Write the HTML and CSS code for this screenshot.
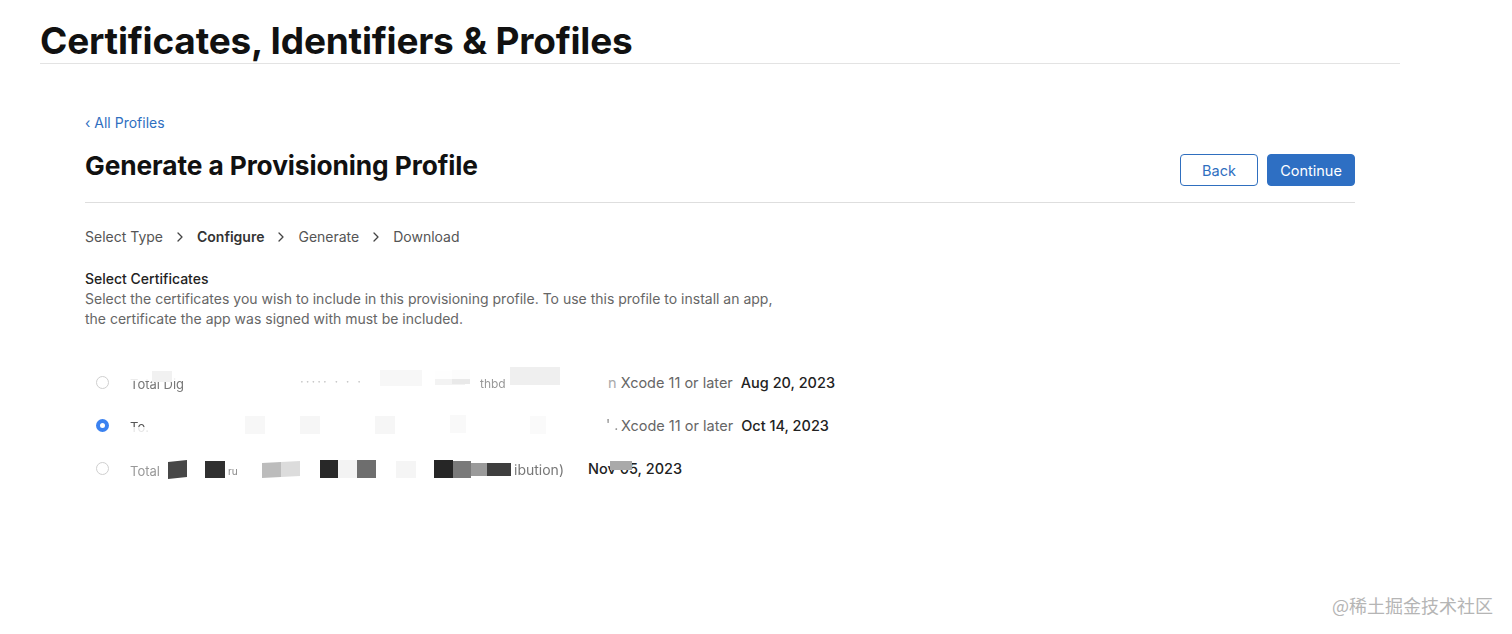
FILE: index.html
```html
<!DOCTYPE html>
<html lang="en">
<head>
<meta charset="utf-8">
<title>Certificates, Identifiers &amp; Profiles</title>
<link rel="stylesheet" href="styles.css">
</head>
<body>
<header class="page-head">
  <h1 class="page-title">Certificates, Identifiers &amp; Profiles</h1>
</header>
<main class="content">
  <a class="back-link" href="#">&lsaquo; All Profiles</a>
  <div class="title-row">
    <h2 class="section-title">Generate a Provisioning Profile</h2>
    <div class="actions">
      <button class="btn btn-outline">Back</button>
      <button class="btn btn-primary">Continue</button>
    </div>
  </div>
  <nav class="steps">
    <span class="step">Select Type</span>
    <svg class="sep" width="6" height="10" viewBox="0 0 6 10"><polyline points="1,1 5,5 1,9" fill="none" stroke="#444" stroke-width="1.3" stroke-linecap="round" stroke-linejoin="round"/></svg>
    <span class="step current">Configure</span>
    <svg class="sep" width="6" height="10" viewBox="0 0 6 10"><polyline points="1,1 5,5 1,9" fill="none" stroke="#444" stroke-width="1.3" stroke-linecap="round" stroke-linejoin="round"/></svg>
    <span class="step">Generate</span>
    <svg class="sep" width="6" height="10" viewBox="0 0 6 10"><polyline points="1,1 5,5 1,9" fill="none" stroke="#444" stroke-width="1.3" stroke-linecap="round" stroke-linejoin="round"/></svg>
    <span class="step">Download</span>
  </nav>
  <section class="certs">
    <h3 class="certs-title">Select Certificates</h3>
    <p class="certs-desc">Select the certificates you wish to include in this provisioning profile. To use this profile to install an app,<br>the certificate the app was signed with must be included.</p>
    <ul class="cert-list">
      <li class="cert">
        <span class="radio"></span>
        <span class="obf obf-1">
          <span class="ft t1">Total Dig</span>
          <span class="cover c-top1"></span>
          <span class="px r1a"></span>
          <span class="ft t2">····· ·  ·  ·</span>
          <span class="px r1b"></span>
          <span class="px r1c"></span>
          <span class="px r1d"></span>
          <span class="ft t3">thbd</span>
          <span class="px r1e"></span>
          <span class="cover c-top2"></span>
        </span>
        <span class="muted"><span class="faint">n</span> Xcode 11 or later</span>
        <span class="date">Aug 20, 2023</span>
      </li>
      <li class="cert">
        <span class="radio checked"></span>
        <span class="obf obf-2">
          <span class="ft t4">To.</span>
          <span class="cover c-top3"></span>
          <span class="px r2a"></span>
          <span class="px r2b"></span>
          <span class="px r2c"></span>
          <span class="px r2d"></span>
          <span class="px r2e"></span>
          <span class="ft t5">' .</span>
        </span>
        <span class="muted">Xcode 11 or later</span>
        <span class="date">Oct 14, 2023</span>
      </li>
      <li class="cert">
        <span class="radio"></span>
        <span class="obf obf-3">
          <span class="ft t6">Total</span>
          <span class="px r3a"></span>
          <span class="px r3b"></span>
          <span class="ft t7">ru</span>
          <span class="px r3c"></span>
          <span class="px r3d"></span>
          <span class="px r3e"></span>
          <span class="px r3f"></span>
          <span class="px r3g"></span>
          <span class="px r3h"></span>
          <span class="px r3i"></span>
          <span class="px r3j"></span>
          <span class="ft t8">ibution)</span>
        </span>
        <span class="date date-3">Nov 05, 2023</span>
        <span class="px r3k"></span>
      </li>
    </ul>
  </section>
</main>
<div class="watermark">@稀土掘金技术社区</div>
</body>
</html>
```

FILE: styles.css
```css
* { box-sizing: border-box; }
html, body { margin: 0; padding: 0; background: #fff; }
body {
  font-family: Inter, "Noto Sans", "Liberation Sans", sans-serif;
  color: #1d1d1f;
  width: 1512px;
  height: 634px;
  overflow: hidden;
  position: relative;
}
.page-head {
  margin: 0 112px 0 40px;
  border-bottom: 1px solid #e3e3e3;
  padding-top: 19px;
}
.page-title {
  margin: 0;
  font-size: 37px;
  font-weight: 700;
  letter-spacing: -0.2px;
  line-height: 44px;
  color: #111;
}
.content {
  margin: 0 157px 0 85px;
  padding-top: 50px;
}
.back-link {
  display: block;
  font-size: 14px;
  color: #2f6fbf;
  text-decoration: none;
  line-height: 18px;
}
.title-row {
  display: flex;
  align-items: flex-start;
  justify-content: space-between;
  margin-top: 18px;
  padding-bottom: 16px;
  border-bottom: 1px solid #dedede;
}
.section-title {
  margin: 0;
  font-size: 26.3px;
  font-weight: 700;
  color: #111;
  letter-spacing: -0.1px;
  line-height: 32px;
}
.actions { display: flex; gap: 9px; margin-top: 4px; }
.btn {
  height: 32px;
  font-family: inherit;
  font-size: 14.5px;
  border-radius: 4px;
  padding: 0;
  cursor: pointer;
}
.btn-outline {
  width: 78px;
  background: #fff;
  color: #2f6fbf;
  border: 1px solid #2f6fbf;
}
.btn-primary {
  width: 88px;
  background: #2e6fc3;
  color: #fff;
  border: 1px solid #2e6fc3;
}
.steps {
  display: flex;
  align-items: center;
  gap: 14px;
  margin-top: 25px;
  font-size: 14px;
  color: #555;
  line-height: 18px;
}
.steps .current { font-weight: 600; color: #333; }
.steps .sep { flex: none; }
.certs { margin-top: 23px; }
.certs-title {
  margin: 0;
  font-size: 14px;
  font-weight: 500;
  color: #222;
  line-height: 20px;
}
.certs-desc {
  margin: 0;
  font-size: 14px;
  color: #666;
  line-height: 20px;
}
.cert-list {
  list-style: none;
  margin: 31px 0 0;
  padding: 0 0 0 11px;
}
.cert {
  display: flex;
  align-items: center;
  height: 44px;
  font-size: 14.5px;
  position: relative;
}
.cert + .cert { height: 43px; }
.radio {
  width: 13px;
  height: 13px;
  border-radius: 50%;
  border: 1px solid #cfcfcf;
  background: #fff;
  margin-right: 21px;
  flex: none;
}
.radio.checked {
  border: 4px solid #3b82f0;
}
.obf {
  position: relative;
  flex: none;
  height: 24px;
}
.obf-1 { width: 478px; }
.obf-2 { width: 491px; }
.obf-3 { width: 458px; }
.ft {
  position: absolute;
  top: 4px;
  white-space: nowrap;
  font-size: 13px;
  line-height: 16px;
  color: #8a8a8a;
  filter: blur(0.5px);
}
.cover { position: absolute; background: #fff; opacity: 0.85; }
.px { position: absolute; display: block; }
.t1 { left: 0; top: 6px; color: #777; }
.c-top1 { left: 0; top: 0; width: 70px; height: 11px; }
.r1a { left: 22px; top: 1px; width: 20px; height: 11px; background: #f1f1f1; }
.t2 { left: 170px; top: 3px; color: #c4c4c4; letter-spacing: 2px; }
.r1b { left: 250px; top: 0; width: 42px; height: 16px; background: #f7f7f7; }
.r1c { left: 305px; top: 1px; width: 30px; height: 14px; background: #f3f3f3; }
.r1d { left: 322px; top: 0; width: 18px; height: 14px; background: #e9e9e9; }
.t3 { left: 350px; top: 6px; color: #999; font-size: 12px; }
.c-top2 { left: 300px; top: 0; width: 80px; height: 9px; }
.r1e { left: 380px; top: -3px; width: 50px; height: 18px; background: #efefef; }
.t4 { left: 0; top: 5px; color: #555; }
.c-top3 { left: 0; top: 13px; width: 40px; height: 8px; }
.r2a { left: 115px; top: 2px; width: 20px; height: 18px; background: #f7f7f7; }
.r2b { left: 170px; top: 2px; width: 20px; height: 18px; background: #f6f6f6; }
.r2c { left: 245px; top: 2px; width: 20px; height: 18px; background: #f6f6f6; }
.r2d { left: 320px; top: 1px; width: 16px; height: 18px; background: #f9f9f9; }
.r2e { left: 400px; top: 2px; width: 16px; height: 18px; background: #fafafa; }
.t5 { left: 476px; top: 3px; color: #888; font-size: 14px; }
.t6 { left: 0; top: 6px; color: #999; }
.r3a { left: 38px; top: 4px; width: 19px; height: 17px; background: #474747; transform: skewY(-6deg); }
.r3b { left: 75px; top: 4px; width: 20px; height: 17px; background: #303030; }
.t7 { left: 98px; top: 6px; color: #888; font-size: 10px; }
.r3c { left: 132px; top: 5px; width: 38px; height: 15px; background: linear-gradient(90deg, #bcbcbc 50%, #dcdcdc 50%); transform: skewY(-3deg); }
.r3d { left: 190px; top: 3px; width: 18px; height: 18px; background: #282828; }
.r3e { left: 208px; top: 3px; width: 19px; height: 18px; background: #f3f3f3; }
.r3f { left: 227px; top: 3px; width: 19px; height: 18px; background: #6e6e6e; }
.r3g { left: 266px; top: 4px; width: 20px; height: 17px; background: #f5f5f5; }
.r3h { left: 304px; top: 3px; width: 19px; height: 18px; background: #262626; }
.r3i { left: 323px; top: 4px; width: 18px; height: 17px; background: #7a7a7a; }
.r3j { left: 341px; top: 6px; width: 40px; height: 13px; background: linear-gradient(90deg, #9a9a9a 0 40%, #3e3e3e 40% 100%); }
.t8 { left: 384px; top: 5px; color: #777; font-size: 14px; }
.r3k { left: 514px; top: 14px; width: 22px; height: 9px; background: #a9a9a9; }
.muted { color: #666; margin-right: 8px; white-space: nowrap; }
.faint { color: #aaa; }
.date { color: #222; font-weight: 500; white-space: nowrap; }
.watermark {
  position: absolute;
  right: 19px;
  bottom: 16px;
  font-size: 18px;
  color: #b5b5b5;
  font-family: "Noto Sans CJK SC", sans-serif;
}
```
